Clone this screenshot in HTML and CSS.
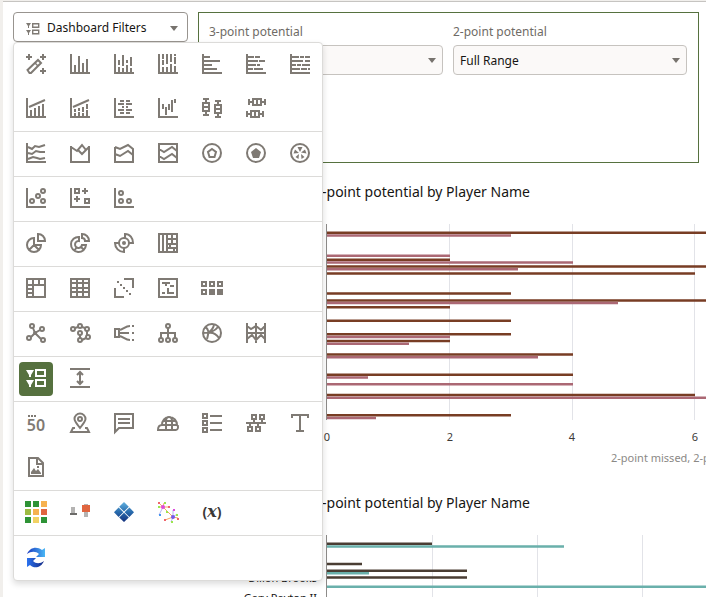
FILE: index.html
```html
<!DOCTYPE html>
<html lang="en">
<head>
<meta charset="utf-8">
<title>Dashboard Filters</title>
<link rel="stylesheet" href="styles.css">
</head>
<body>
<main class="workspace">
  <div class="toolbar">
    <div class="picker">
      <button class="picker-button" type="button" aria-haspopup="true" aria-expanded="true">
        <svg class="picker-icon" viewBox="0 0 14 13" aria-hidden="true"><path class="solid" d="M0 1h5L3 4v2H2V4zM0 8h5l-2 3v2H2v-2z"/><path class="thin" d="M6.7 1.7h6v3.6h-6zM6.7 8.2h6v3.6h-6z"/></svg>
        <span class="picker-label">Dashboard Filters</span>
        <span class="caret"></span>
      </button>

      <div class="gallery">
        <div class="group">
          <button type="button" aria-label="Auto visualization"><svg viewBox="0 0 20 20"><path d="M3 0v6M0 3h6M17 0v6M14 3h6M17 14v6M14 17h6"/><path d="M1.5 16 12 6l3 3L5 19H3.500z"/><path class="thin" d="M9 9l3 3"/></svg></button>
          <button type="button" aria-label="Bar"><svg viewBox="0 0 20 20"><path d="M1 0v19h19M5 11v8M9 2v17M13 9v10M17 5v14"/></svg></button>
          <button type="button" aria-label="Stacked bar"><svg viewBox="0 0 20 20"><path d="M1 0v19h19M5 6v5M5 13v5M9 1v11M9 14v4M13 6v3M13 11v7M17 3v9M17 14v4"/></svg></button>
          <button type="button" aria-label="100% stacked bar"><svg viewBox="0 0 20 20"><path d="M1 0v19h19M5 0v5M5 6v5M5 13v5M9 0v10M9 13v5M13 0v8M13 10v8M17 0v2M17 3v7M17 12v6"/></svg></button>
          <button type="button" aria-label="Horizontal bar"><svg viewBox="0 0 20 20"><path d="M1 0v19h19M2 3h6M2 7h16M2 11h8M2 15h13"/></svg></button>
          <button type="button" aria-label="Horizontal stacked"><svg viewBox="0 0 20 20"><path d="M1 0v19h19M2 3h6M9 3h5M2 7h10M13 7h6M2 11h8M11 11h3M2 15h5M8 15h9"/></svg></button>
          <button type="button" aria-label="Horizontal 100% stacked"><svg viewBox="0 0 20 20"><path d="M1 0v19h19M2 3h7M10 3h4M15 3h5M2 7h11M15 7h5M2 11h4M7 11h4M12 11h8M2 15h8M11 15h6M18 15h2"/></svg></button>
          <button type="button" aria-label="Combo"><svg viewBox="0 0 20 20"><path d="M1 0v19h19M3 9l16-7M5 12v7M9 10v9M13 8v11M17 6v13"/></svg></button>
          <button type="button" aria-label="Stacked combo"><svg viewBox="0 0 20 20"><path d="M1 0v19h19M3 9l16-7M5 11v3M5 15v3M9 10v3M9 14v4M13 9v5M13 15v3M17 6v5M17 12v6"/></svg></button>
          <button type="button" aria-label="Butterfly"><svg viewBox="0 0 20 20"><path d="M1 0v19h19M6 3h4M12 3h4M4 6h6M12 6h6M8 9h2M12 9h2M4 12h6M12 12h6M6 15h4M12 15h4"/></svg></button>
          <button type="button" aria-label="Waterfall"><svg viewBox="0 0 20 20"><path d="M1 0v19h19M5 6v5M8 9v8M11 6v6M14 2v12M17 1v4"/></svg></button>
          <button type="button" aria-label="Boxplot"><svg viewBox="0 0 20 20"><path d="M1 1h6M4 1v4M1 5h6v8H1zM0 9h8M4 13v4M1 17h6M13 3h6M16 3v4M13 7h6v8h-6zM12 11h8M16 15v4M13 19h6"/></svg></button>
          <button type="button" aria-label="Horizontal boxplot"><svg viewBox="0 0 20 20"><path d="M3 1v6M3 4h3M7 1h8v6H7zM11 0v8M15 4h4M19 1v6M1 13v6M1 16h3M5 13h8v6H5zM9 12v8M13 16h4M17 13v6"/></svg></button>
        </div>
        <div class="group">
          <button type="button" aria-label="Line"><svg viewBox="0 0 20 20"><path d="M1 0v19h19M2 4l4 2 3-3 4 1 6-2M2 10l4 1 4-3 4 1 5 0M2 16l5-2 4 1 3 1 5-1"/></svg></button>
          <button type="button" aria-label="Area"><svg viewBox="0 0 20 20"><path d="M1 3v16h18V3M1 4l6 4 5-6 4 5 3-3M8 7l4 4 4-4"/></svg></button>
          <button type="button" aria-label="Stacked area"><svg viewBox="0 0 20 20"><path d="M1 4v15h18V6l-5-4-8 4-5-2M1 11l5 2 8-5 5 4"/></svg></button>
          <button type="button" aria-label="100% stacked area"><svg viewBox="0 0 20 20"><path d="M1 1h18v18H1zM1 6l5 3 8-5 5 4M1 13l5 3 8-5 5 4"/></svg></button>
          <button type="button" aria-label="Radar line"><svg viewBox="0 0 20 20"><circle cx="10" cy="10" r="9"/><path d="M10 6l4 3-1.500 5h-5L6 9z"/></svg></button>
          <button type="button" aria-label="Radar area"><svg viewBox="0 0 20 20"><circle cx="10" cy="10" r="9"/><path class="solid" d="M10 5l5 4-2 6H7L5 9z"/></svg></button>
          <button type="button" aria-label="Radar bar"><svg viewBox="0 0 20 20"><circle cx="10" cy="10" r="9"/><path class="solid" d="M10 9 7.500 4h5zM11 9.500l4-3 1.500 4zM11 11l3.500 3-3 2zM9 11l-.5 5-3-2zM9 10l-5.500.5L5 6.500z"/></svg></button>
        </div>
        <div class="group">
          <button type="button" aria-label="Scatter"><svg viewBox="0 0 20 20"><path d="M1 0v19h19"/><circle cx="6" cy="13" r="2"/><circle cx="12" cy="8" r="2"/><circle cx="17" cy="3" r="2"/><circle cx="17" cy="13" r="2"/></svg></button>
          <button type="button" aria-label="Scatter by category"><svg viewBox="0 0 20 20"><path d="M1 0v19h19M5 1h4v4H5zM15 0v6M12 3h6M7 8v6M4 11h6M15 11h4v4h-4z"/></svg></button>
          <button type="button" aria-label="Stacked scatter"><svg viewBox="0 0 20 20"><path d="M1 0v19h19"/><circle cx="7" cy="5" r="2"/><circle cx="7" cy="13" r="2"/><circle cx="15" cy="13" r="2"/></svg></button>
        </div>
        <div class="group">
          <button type="button" aria-label="Pie"><svg viewBox="0 0 20 20"><path d="M12 1c4 0 7 3 7 7h-7zM8 5a7 7 0 1 0 7 7H8zM8 12l-5 5M8 12l5 5"/></svg></button>
          <button type="button" aria-label="Donut"><svg viewBox="0 0 20 20"><path d="M12 1c4 0 7 3 7 7h-4c0-2-1-3-3-3zM9 4a7.500 7.500 0 1 0 7 8h-4a3.500 3.500 0 1 1-3-4zM7 14l-3 4M11 14l3 3"/></svg></button>
          <button type="button" aria-label="Sunburst"><svg viewBox="0 0 20 20"><circle cx="10" cy="10" r="5"/><circle class="solid" cx="10" cy="10" r="2"/><path d="M11 5V1c5 0 8 4 8 9h-4M10 15v4c-5 0-9-4-9-9h4"/></svg></button>
          <button type="button" aria-label="Treemap"><svg viewBox="0 0 20 20"><path d="M1 1h18v18H1zM5 1v18M9 1v18M9 6h10M14 1v10M9 11h10M9 15h10M12 11v4M16 15v4"/></svg></button>
        </div>
        <div class="group">
          <button type="button" aria-label="Pivot"><svg viewBox="0 0 20 20"><path d="M1 1h18v18H1zM1 7h18M7 1v18M13 1v6M1 11h6M1 15h6"/></svg></button>
          <button type="button" aria-label="Table"><svg viewBox="0 0 20 20"><path d="M1 1h18v18H1zM7 1v18M13 1v18M1 5h18M1 10h18M1 14h18"/></svg></button>
          <button type="button" aria-label="Correlation matrix"><svg viewBox="0 0 20 20"><path d="M10 1h9v9M1 10v9h9"/><path class="solid" d="M3 3h2v2H3zM6 6h2v2H6zM9 9h2v2H9zM12 12h2v2h-2zM15 15h2v2h-2z"/></svg></button>
          <button type="button" aria-label="Word cloud"><svg viewBox="0 0 20 20"><path d="M1 1h18v18H1zM4 5h8M8 5v3M12 8h4M10 10v5h6M4 15h3"/></svg></button>
          <button type="button" aria-label="Matrix"><svg class="wide" viewBox="0 0 22 20"><path d="M1 4h4v4H1zM9 4h4v4H9zM17 4h4v4h-4zM1 12h4v4H1z"/><path class="solid" d="M8 11h6v6H8zM16 11h6v6h-6z"/></svg></button>
        </div>
        <div class="group">
          <button type="button" aria-label="Network"><svg viewBox="0 0 20 20"><circle cx="6" cy="3" r="2"/><circle cx="16" cy="6" r="2"/><circle cx="3" cy="15" r="2"/><circle cx="17" cy="17" r="2"/><path d="M7 5l2 5M14 7l-5 3-4 4M9 10l6 6"/><circle class="solid" cx="9" cy="10" r="2"/></svg></button>
          <button type="button" aria-label="Circular network"><svg viewBox="0 0 20 20"><circle cx="3" cy="6" r="2"/><circle cx="10" cy="3" r="2"/><circle cx="17" cy="6" r="2"/><circle cx="10" cy="10" r="2"/><circle cx="18" cy="14" r="2"/><circle cx="10" cy="17" r="2"/><path d="M5 5l3-1M12 4l3 1M17 8v4M10 12v3M12 17l4-2"/></svg></button>
          <button type="button" aria-label="Sankey"><svg viewBox="0 0 20 20"><path d="M1 6h4v8H1zM5 7c4 0 6-4 11-4M5 10h10M5 13c4 0 6 4 11 4"/><path class="solid" d="M18 2h2v2h-2zM18 9h2v2h-2zM18 16h2v2h-2z"/></svg></button>
          <button type="button" aria-label="Tree diagram"><svg viewBox="0 0 20 20"><circle cx="10" cy="3" r="2"/><circle cx="3" cy="17" r="2"/><circle cx="10" cy="17" r="2"/><circle cx="17" cy="17" r="2"/><path d="M10 5v10M3 15v-5h14v5"/></svg></button>
          <button type="button" aria-label="Chord diagram"><svg viewBox="0 0 20 20"><circle cx="10" cy="10" r="9"/><path d="M1 10c7 0 12-2 15-6M3 4c4 2 4 5 2 12M6 10c5-1 9 2 11 5M12 2c-1 4-3 6-6 8"/></svg></button>
          <button type="button" aria-label="Parallel coordinates"><svg viewBox="0 0 20 20"><path d="M1 0v20M10 0v20M19 0v20M1 3l4 3 5-3 5 4 4-4M1 10h18M1 16l5-4 4 5 5-5 4 4"/></svg></button>
        </div>
        <div class="group">
          <button class="selected" type="button" aria-label="Dashboard Filters" aria-pressed="true"><svg viewBox="0 0 20 20"><path class="solid" d="M0 2h8L5 7v2H3V7zM0 12h8l-3 5v2H3v-2z"/><path d="M10 2h9v6h-9zM10 12h9v6h-9z"/></svg></button>
          <button type="button" aria-label="Spacer"><svg viewBox="0 0 20 20"><path d="M0 1h20M0 19h20M10 4v12M7 7l3-3 3 3M7 13l3 3 3-3"/></svg></button>
        </div>
        <div class="group">
          <button type="button" aria-label="Tile"><svg viewBox="0 0 20 20"><path class="solid" d="M2 2h2v2H2zM5 2h2v2H5zM8 2h2v2H8z"/><text class="digits" x="10" y="18">50</text></svg></button>
          <button type="button" aria-label="Map"><svg viewBox="0 0 20 20"><path d="M10 15C6 10 4.500 8 4.500 6a5.500 5.500 0 0 1 11 0c0 2-1.500 4-5.500 9zM5 15H3l-2 4h18l-2-4h-2"/><circle cx="10" cy="6" r="2"/></svg></button>
          <button type="button" aria-label="Narrative"><svg viewBox="0 0 20 20"><path d="M1 1h18v14H5l-4 4zM4 6h12M4 10h12"/></svg></button>
          <button type="button" aria-label="Globe map"><svg class="wide" viewBox="0 0 22 20"><path d="M1 17c0-4 2-5 4-5 0-4 3-8 7-8 5 0 8 4 8 8 2 1 1 5-1 5zM5 12h15M9 17V8c0-2 1-4 3-4s3 2 3 4v9M6 8h13"/></svg></button>
          <button type="button" aria-label="List"><svg viewBox="0 0 20 20"><path d="M1 1h4v4H1zM1 8h4v4H1zM1 15h4v4H1zM8 3h12M8 10h12M8 17h12"/></svg></button>
          <button type="button" aria-label="Hierarchy"><svg viewBox="0 0 20 20"><path d="M6 2h4v4H6zM14 2h4v4h-4zM8 6v4M16 6v4M0 10h20M4 10v4M12 10v4M2 14h4v4H2zM10 14h4v4h-4z"/></svg></button>
          <button type="button" aria-label="Text box"><svg viewBox="0 0 20 20"><path d="M2 5V2h16v3M10 2v16M6 18h8"/></svg></button>
          <button type="button" aria-label="Image"><svg viewBox="0 0 20 20"><path d="M3 1h9l5 5v13H3zM11 1v6h6"/><path class="solid" d="M5 17v-2l3-4 2 3 2-2 3 4v1zM11 9h2v2h-2z"/></svg></button>
        </div>
        <div class="group">
          <button type="button" aria-label="Heat grid"><svg class="wide" viewBox="0 0 22 22"><path class="c-green" d="M0 0h6v6H0zM8 0h6v6H8zM0 16h6v6H0zM16 16h6v6h-6z"/><path class="c-amber" d="M16 0h6v6h-6zM8 8h6v6H8z"/><path class="c-lime" d="M0 8h6v6H0z"/><path class="c-red" d="M16 8h6v6h-6z"/><path class="c-yellow" d="M8 16h6v6H8z"/></svg></button>
          <button type="button" aria-label="Deviation"><svg viewBox="0 0 20 20"><path class="c-gray" d="M1 5h4v7H1zM14 2h4v13h-4z"/><path class="c-dark" d="M0 11h7v2H0z"/><path class="c-red" d="M12 3h8v7h-8z"/></svg></button>
          <button type="button" aria-label="Diamond"><svg viewBox="0 0 20 20"><defs><linearGradient id="blue" x1="0" y1="0" x2="0" y2="20" gradientUnits="userSpaceOnUse"><stop offset="0" stop-color="#62b1df"/><stop offset=".5" stop-color="#286bad"/><stop offset="1" stop-color="#14317d"/></linearGradient></defs><path class="c-blue" d="M10 0l4.800 4.800L10 9.600 5.200 4.800zM4.600 5.400l4.800 4.800L4.600 15 0 10.200zM15.400 5.400l4.600 4.800-4.600 4.800-4.800-4.800zM10 10.800l4.800 4.700L10 20l-4.800-4.500z"/></svg></button>
          <button type="button" aria-label="Clusters"><svg class="wide" viewBox="0 0 22 22"><path class="rays-warm" d="M6 6 2 2M6 6l1-4M6 6h6M6 6 2 6M16 16l-8 3M16 16l5 1M16 16 6 6"/><path class="rays-cool" d="M6 6 2 14M16 16V9M16 16l4-3M16 16l-2 5"/><circle class="c-magenta" cx="6" cy="6" r="2"/><circle class="c-violet" cx="16" cy="16" r="2"/><path class="c-pink" d="M1 1h2v2H1zM11 5h2v2h-2zM7 18h2v2H7zM20 17h2v2h-2z"/><path class="c-spring" d="M7 1h2v2H7zM1 5h2v2H1zM9 10h2v2H9zM14 20h2v2h-2zM19 13h2v2h-2z"/><path class="c-sky" d="M2 13h2v2H2z"/><path class="c-magenta" d="M16 8h2v2h-2z"/></svg></button>
          <button class="expression" type="button" aria-label="Expression">(<i>x</i>)</button>
        </div>
        <div class="group">
          <button type="button" aria-label="Refresh"><svg viewBox="0 0 20 20"><defs><linearGradient id="sync-a"><stop offset="0" stop-color="#1a39c0"/><stop offset="1" stop-color="#4ab7f5"/></linearGradient><linearGradient id="sync-b"><stop offset="0" stop-color="#2b73f0"/><stop offset="1" stop-color="#142a85"/></linearGradient></defs><path class="sync-top" d="M1 7C4 0 11-1 16 3l3-2v9H10l3-3C10 4 5 4 1 7z"/><path class="sync-bottom" d="M18 14c-3 7-10 8-14 4l-3 2v-9h9l-3 3c3 3 7 3 11 0z"/></svg></button>
        </div>
      </div>
    </div>

    <section class="filters">
      <div class="field">
        <label for="three">3-point potential</label>
        <div class="select-box"><select id="three"><option>Full Range</option></select><span class="caret"></span></div>
      </div>
      <div class="field">
        <label for="two">2-point potential</label>
        <div class="select-box"><select id="two"><option>Full Range</option></select><span class="caret"></span></div>
      </div>
    </section>
  </div>

  <section class="chart">
    <h2>3-point potential by Player Name</h2>
    <svg class="plot plot-first" role="img" aria-label="Missed and potential points by player">
      <path class="grid" d="M123.500 0v196M246.500 0v196M368.500 0v196"/>
      <path class="bars brown" d="M1 8.800h800M1 35.800h123M1 42.600h800M1 49.400h368M1 69.600h184M1 76.400h800M1 83.200h123M1 96.700h184M1 110.200h184M1 117h123M1 130.500h246M1 150.800h246M1 171h368M1 191.300h184"/>
      <path class="bars rose" d="M1 11.500h184M1 31.800h123M1 38.500h246M1 45.300h191M1 79.100h291M1 112.900h123M1 119.700h82M1 133.200h211M1 153.500h41M1 160.200h246M1 173.700h800M1 194h49"/>
      <path class="axis" d="M.5 0v196"/>
      <text class="tick" x="1" y="217">0</text>
      <text class="tick" x="124" y="217">2</text>
      <text class="tick" x="246" y="217">4</text>
      <text class="tick" x="369" y="217">6</text>
      <text class="axis-title" x="285" y="238">2-point missed, 2-point potential</text>
    </svg>
  </section>

  <section class="chart">
    <h2>3-point potential by Player Name</h2>
    <div class="chart-body">
      <ul class="names"><li>Dillon Brooks</li><li>Gary Payton II</li></ul>
      <svg class="plot plot-second" role="img" aria-label="Missed and potential points by player">
        <path class="grid" d="M106.500 0v90M211.500 0v90M316.500 0v90"/>
        <path class="bars dark" d="M1 8.700h105M1 29h35M1 35.700h140M1 42.500h140"/>
        <path class="bars teal" d="M1 11.400h237M1 38.300h42M1 51.800h800"/>
        <path class="axis" d="M.5 0v90"/>
      </svg>
    </div>
  </section>
</main>
</body>
</html>
```
FILE: styles.css
```css
* {
  box-sizing: border-box;
}

html,
body {
  height: 100%;
  margin: 0;
  overflow: hidden;
}

body {
  padding: 1px 0 0 3px;
  background: #f1efec;
  color: #161513;
  font: 12px/16px "Noto Sans", "Open Sans", sans-serif;
}

button,
select {
  font: inherit;
  color: inherit;
}

.workspace {
  height: 100%;
  overflow: hidden;
  border-top: 1px solid #c6c4c1;
  background: #fff;
}

.toolbar {
  display: flex;
  align-items: flex-start;
  gap: 10px;
  padding: 10px 7px 0 10px;
}

.picker {
  position: relative;
  flex: 0 0 175px;
}

.picker-button {
  display: flex;
  align-items: center;
  width: 100%;
  height: 30px;
  padding: 2px 9px 0 12px;
  border: 1px solid #98948f;
  border-radius: 4px;
  background: #fff;
}

.picker-icon {
  width: 14px;
  height: 13px;
  margin-right: 7px;
}

.picker-label {
  flex: 1;
  text-align: left;
  white-space: nowrap;
}

.caret {
  border: 4px solid transparent;
  border-top: 5px solid #77736e;
  border-bottom: 0;
}

svg {
  fill: none;
  stroke: #7f7a74;
  stroke-width: 2;
}

svg .solid {
  fill: #7f7a74;
  stroke: none;
}

svg .thin {
  stroke-width: 1.4;
}

.gallery {
  position: absolute;
  z-index: 2;
  top: 30px;
  left: 0;
  width: 310px;
  border: 1px solid #dcdbd9;
  border-radius: 4px;
  background: #fff;
  box-shadow: 0 3px 6px rgba(0, 0, 0, .14);
}

.group {
  display: grid;
  grid-template-columns: repeat(7, 44px);
  grid-auto-rows: 44px;
  place-items: center;
}

.group + .group {
  border-top: 1px solid #dcdbd9;
}

.group button {
  display: grid;
  place-items: center;
  width: 34px;
  height: 34px;
  padding: 0 0 2px;
  border: 0;
  border-radius: 4px;
  background: none;
}

.group svg {
  width: 20px;
  height: 20px;
  overflow: visible;
}

.group .wide {
  width: 22px;
  height: 22px;
}

.group .selected {
  background: #56713f;
}

.selected svg {
  stroke: #fff;
}

.selected .solid {
  fill: #fff;
}

svg text {
  stroke: none;
}

.digits {
  fill: #7f7a74;
  font-size: 16px;
  font-weight: 600;
  text-anchor: middle;
}

.group .expression {
  display: flex;
  align-items: center;
  justify-content: center;
  color: #3a3836;
  font-size: 14px;
  font-weight: 700;
  line-height: 20px;
}

.expression i {
  font-family: "DejaVu Serif", "Liberation Serif", serif;
  font-size: 16px;
}

[class^="c-"] {
  stroke: none;
}

.c-green { fill: #2e9336; }
.c-amber { fill: #f6b14f; }
.c-lime { fill: #9dbb42; }
.c-red { fill: #e0653f; }
.c-yellow { fill: #f2d264; }
.c-gray { fill: #b4b3b2; }
.c-dark { fill: #6c6b69; }
.c-blue { fill: url(#blue); }
.c-magenta { fill: #dd4bdc; }
.c-violet { fill: #7659e8; }
.c-pink { fill: #f0646b; }
.c-spring { fill: #9be64d; }
.c-sky { fill: #4596f0; }

.rays-warm {
  stroke: #f5a765;
  stroke-width: 1;
}

.rays-cool {
  stroke: #b7b5f2;
  stroke-width: 1;
}

.sync-top {
  fill: url(#sync-a);
  stroke: none;
}

.sync-bottom {
  fill: url(#sync-b);
  stroke: none;
}

.filters {
  display: grid;
  flex: 1;
  grid-template-columns: 1fr 1fr;
  gap: 10px;
  min-height: 151px;
  padding: 11px 11px 0 10px;
  border: 1px solid #56713f;
}

.field label {
  display: block;
  margin-bottom: 5px;
  color: #6f6b66;
}

.select-box {
  display: grid;
  align-items: center;
}

.select-box > * {
  grid-area: 1 / 1;
}

.select-box .caret {
  justify-self: end;
  margin-right: 7px;
  pointer-events: none;
}

select {
  width: 100%;
  height: 30px;
  padding: 2px 6px 0;
  border: 1px solid #c6c3bf;
  border-radius: 4px;
  background: #fbf9f8;
  appearance: none;
}

.chart {
  padding-left: 323px;
}

.chart h2 {
  margin: 19px 0 22px -12px;
  font-size: 14px;
  font-weight: 400;
  line-height: 20px;
}

.plot {
  display: block;
  width: 100%;
  overflow: hidden;
}

.plot-first {
  height: 250px;
  overflow: visible;
}

.plot-second {
  height: 90px;
}

.grid {
  stroke: #e2e3e8;
  stroke-width: 1;
}

.axis {
  stroke: #8d8b89;
  stroke-width: 1;
}

.bars {
  stroke-width: 2.5;
}

.brown { stroke: #783d24; }
.rose { stroke: #ab6874; }
.dark { stroke: #4a3d33; }
.teal { stroke: #6ab0ab; }

.tick {
  fill: #3c3a38;
  font-size: 11px;
  text-anchor: middle;
}

.axis-title {
  fill: #8b8986;
  font-size: 11px;
}

.chart-body {
  display: grid;
  grid-template-columns: 1fr;
}

.names {
  width: 90px;
  margin: 33px 0 0 -99px;
  padding: 0;
  list-style: none;
  font-size: 11px;
  line-height: 20px;
  text-align: right;
}

.chart-body > * {
  grid-area: 1 / 1;
}
```
